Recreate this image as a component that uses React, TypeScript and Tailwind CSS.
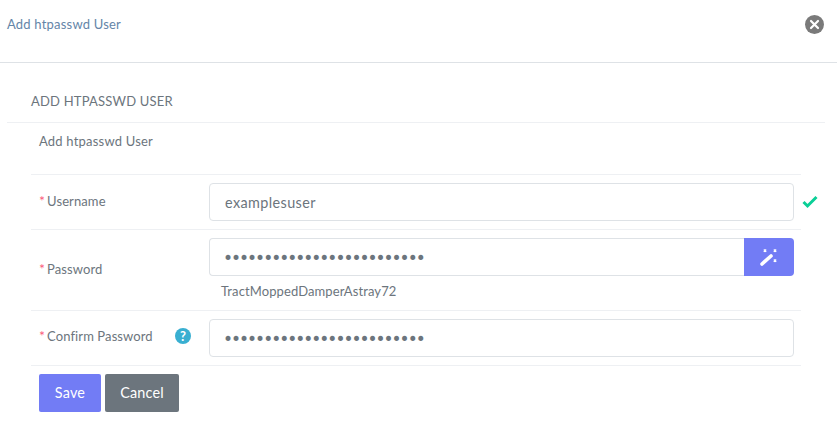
const font = { fontFamily: '"Lato", "Noto Sans", sans-serif' };

function Req({ children }: { children: React.ReactNode }) {
  return (
    <label className="flex items-center text-[13px] leading-[20px] tracking-[0.1px] text-[#6c757d]">
      <span className="mr-[2px] text-[14px] text-[#fa5c7c]">*</span>
      {children}
    </label>
  );
}

const baseCls =
  "block h-[38px] w-full rounded-[4px] border border-[#dee2e6] bg-white pr-3 text-[#6c757d] outline-none";
const textCls = "pl-[15px] text-[14.4px] tracking-[0.4px]";
const passCls = "pl-[13px] pt-[2px] font-['DejaVu_Sans'] text-[17px] tracking-[-2px]";

export default function App() {
  return (
    <div style={font} className="h-[442px] w-[837px] overflow-hidden bg-white">
      <header className="flex h-[63px] items-start justify-between border-b border-[#dee2e6] pl-[7px] pr-[13px]">
        <h1 className="mt-[14px] text-[13px] leading-[20px] tracking-[0.2px] text-[#6485a8]">Add htpasswd User</h1>
        <button className="mt-[15px] flex h-[19px] w-[19px] items-center justify-center rounded-full bg-[#7a7a7a]">
          <svg width="11" height="11" viewBox="0 0 11 11">
            <path d="M2 2L9 9M9 2L2 9" stroke="white" strokeWidth="2.2" strokeLinecap="round" />
          </svg>
        </button>
      </header>

      <section className="ml-[7px] mr-[12px]">
        <div className="flex h-[60px] items-end border-b border-[#eef0f3] pb-[11px] pl-[24px]">
          <h2 className="text-[13px] leading-[20px] tracking-[0.2px] text-[#6c757d]">ADD HTPASSWD USER</h2>
        </div>

        <div className="w-[794px] pl-[24px]">
          <p className="h-[52px] border-b border-[#eef0f3] pl-[8px] pt-[8px] text-[13px] leading-[20px] tracking-[0.2px] text-[#6c757d]">
            Add htpasswd User
          </p>

          <div className="flex h-[55px] items-center border-b border-[#eef0f3] pl-[8px]">
            <div className="mb-[2px] w-[170px] shrink-0">
              <Req>Username</Req>
            </div>
            <div className="w-[585px] shrink-0">
              <input className={baseCls + " " + textCls} readOnly value="examplesuser" />
            </div>
            <svg className="mb-[1px] ml-[8px] shrink-0" width="16" height="14" viewBox="0 0 16 14">
              <path d="M1.5 7L5.5 11L14.5 2" fill="none" stroke="#0acf97" strokeWidth="3" />
            </svg>
          </div>

          <div className="flex h-[81px] items-start border-b border-[#eef0f3] pl-[8px] pt-[8px]">
            <div className="mt-[21px] w-[170px]">
              <Req>Password</Req>
            </div>
            <div className="w-[585px]">
              <div className="flex">
                <input
                  className={baseCls + " min-w-0 flex-1 rounded-r-none border-r-0 " + passCls}
                  readOnly
                  type="password"
                  value="TractMoppedDamperAstray72"
                />
                <button className="flex h-[38px] w-[50px] shrink-0 items-center justify-center rounded-r-[4px] bg-[#727cf5]">
                  <svg width="20" height="18" viewBox="0 0 20 18">
                    <path d="M3 16L12 8" stroke="white" strokeWidth="3.6" strokeLinecap="round" />
                    <path d="M4.8 1.5L7.2 3.9M7.2 1.5L4.8 3.9M14.8 1.5L17.2 3.9M17.2 1.5L14.8 3.9M14.8 11.5L17.2 13.9M17.2 11.5L14.8 13.9" stroke="white" strokeWidth="1.3" />
                  </svg>
                </button>
              </div>
              <p className="mt-[5px] pl-[12px] text-[13px] leading-[20px] tracking-[0.1px] text-[#6c757d]">TractMoppedDamperAstray72</p>
            </div>
          </div>

          <div className="flex h-[55px] items-center border-b border-[#eef0f3] pl-[8px]">
            <div className="mb-[4px] flex w-[170px] items-center justify-between pr-[18px]">
              <Req>Confirm Password</Req>
              <svg width="16" height="16" viewBox="0 0 16 16">
                <circle cx="8" cy="8" r="8" fill="#39afd1" />
                <text x="8" y="12.5" textAnchor="middle" fontSize="13" fontWeight="700" fill="white" fontFamily="Lato, sans-serif">?</text>
              </svg>
            </div>
            <div className="w-[585px]">
              <input className={baseCls + " " + passCls} readOnly type="password" value="TractMoppedDamperAstray72" />
            </div>
          </div>

          <div className="flex gap-[4px] pl-[8px] pt-[8px]">
            <button className="h-[38px] w-[62px] rounded-[2px] bg-[#727cf5] text-[14.4px] tracking-[0.2px] text-white">Save</button>
            <button className="h-[38px] w-[74px] rounded-[2px] bg-[#6c757d] text-[14.4px] tracking-[0.2px] text-white">Cancel</button>
          </div>
        </div>
      </section>
    </div>
  );
}
